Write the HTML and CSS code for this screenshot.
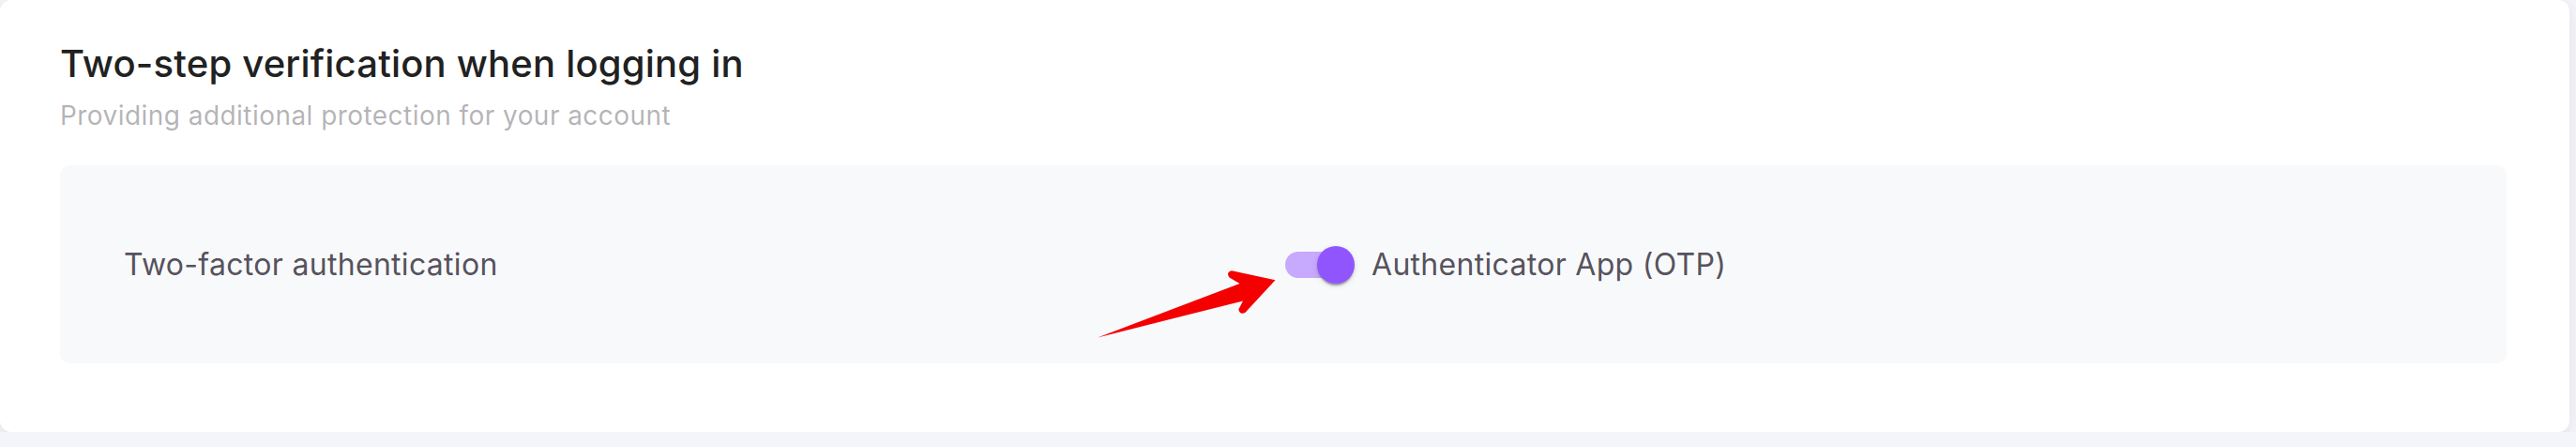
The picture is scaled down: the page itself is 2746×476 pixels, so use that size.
FILE: index.html
```html
<!DOCTYPE html>
<html>
<head>
	<title>Security</title>
	<link rel="stylesheet" href="styles.css">
</head>
<body>
	<div class="card">
		<h2 class="card-title">Two-step verification when logging in</h2>
		<p class="card-sub">Providing additional protection for your account</p>

		<div class="option">
			<div class="option-name">Two-factor authentication</div>
			<label class="switch-label">
				<span class="switch">
					<span class="track"></span>
					<span class="thumb"></span>
				</span>
				<span class="switch-text">Authenticator App (OTP)</span>
			</label>
		</div>
	</div>

	<!-- red annotation arrow pointing at the switch -->
	<svg class="arrow" width="300" height="130" viewBox="0 0 300 130">
		<path d="M20 119.5 L171.5 62 L160.5 55.5 Q156.5 50 163 48.3 L209.5 58.3 L177.5 92.8 Q172 96 170.3 89.5 L175 80.5 Z" fill="#f40000"/>
	</svg>
</body>
</html>
```

FILE: styles.css
```css
*{padding:0; margin:0; box-sizing:border-box;}
body{background:#f4f5fa; font-family:Inter, "Noto Sans", sans-serif; position:relative;}

.card{margin-right:7px; background:#fff; border-radius:12px; padding:44px 67px 73px 64px; box-shadow:0 4px 16px rgba(58,53,65,.1);}
.card-title{font-size:40px; line-height:48px; font-weight:500; color:#212121; letter-spacing:.2px; margin-bottom:14px;}
.card-sub{font-size:28px; line-height:34px; color:rgba(58,53,65,.38); letter-spacing:.45px;}

.option{margin-top:36px; height:211px; background:#f8f9fb; border-radius:10px; padding:0 68px; display:grid; grid-template-columns:1214px 1fr; align-items:center;}
.option-name, .switch-text{font-size:32px; line-height:48px; color:rgba(58,53,65,.87); letter-spacing:.3px;}

.switch-label{display:flex; align-items:center;}
.switch{position:relative; width:116px; height:76px; display:flex; align-items:center; padding:0 24px;}
.track{width:68px; height:28px; border-radius:14px; background:#c7a9fd;}
.thumb{position:absolute; left:58px; top:18px; width:40px; height:40px; border-radius:50%; background:#9155fd; box-shadow:0 4px 2px -2px rgba(0,0,0,.2), 0 2px 2px 0 rgba(0,0,0,.14), 0 2px 6px 0 rgba(0,0,0,.12);}

.arrow{position:absolute; left:1150px; top:240px;}
```
